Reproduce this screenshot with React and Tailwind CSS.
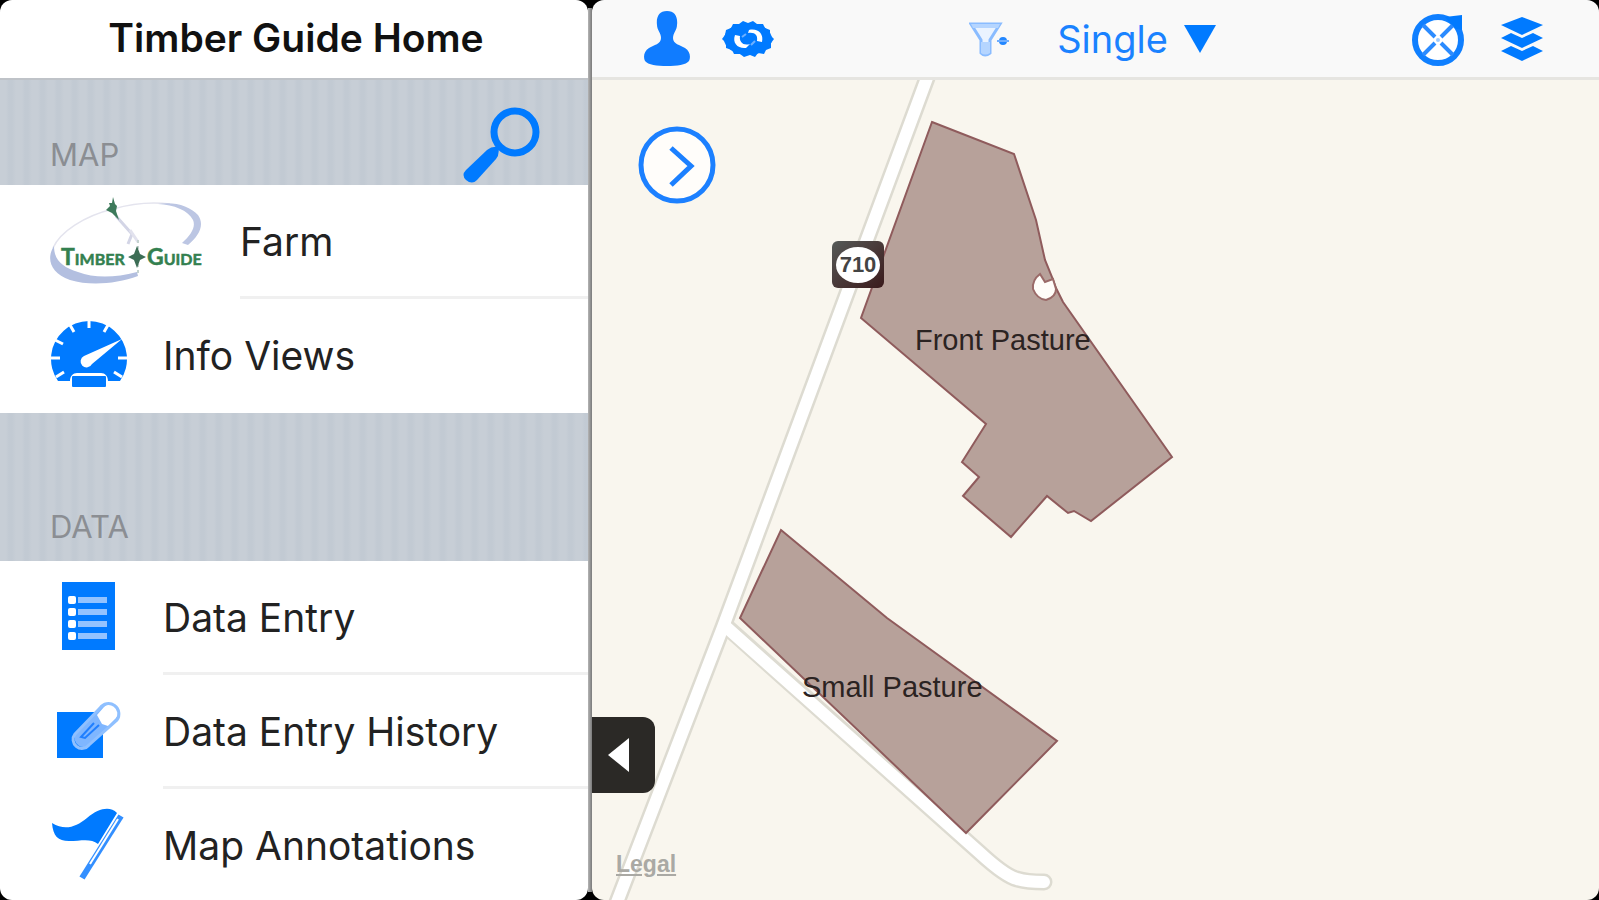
import React, { useState } from 'react';

const LogoIcon = () => (
  <svg width="152" height="88" viewBox="0 0 152 88" aria-hidden="true">
    <path d="M3 52C10 36 34 20 63 13C84 7 104 6 120 8" fill="none" stroke="#e4e4ee" strokeWidth="1.5" />
    <path d="M4 50C-4 62 0 77 20 84C40 90 66 88 88 80L87 76C64 82 44 82 28 76C12 71 4 64 4 50Z" fill="#b3bfe0" />
    <path d="M108 8C124 5 140 10 148 19C155 29 149 40 138 49L132 47C141 39 146 31 143 24C138 14 124 9 108 8Z" fill="#bcc6e3" />
    <path d="M66 20L82 38L78 48" fill="none" stroke="#d3d5e6" strokeWidth="3" />
    <path d="M80 34L88 46" stroke="#e2e2ee" strokeWidth="3" />
    <path d="M63 1L65 8L67 10L66 15L69 24L62 17L56 14L60 10L59 7L62 7Z" fill="#3d7a5b" />
    <path d="M88 44V78" stroke="#c5d3d0" strokeWidth="2" strokeDasharray="3 3" />
    <path d="M87 50L90 58L96 61L90 64L87 72L84 64L78 61L84 58Z" fill="#3c6d55" />
    <g fill="#33804f" stroke="#33804f" strokeWidth="0.5" fontFamily="Lato, sans-serif" fontWeight="700">
      <text x="11" y="69" fontSize="23">T<tspan fontSize="16">IMBER</tspan></text>
      <text x="97" y="69" fontSize="23">G<tspan fontSize="16">UIDE</tspan></text>
    </g>
  </svg>
);

const GaugeIcon = () => (
  <svg width="78" height="68" viewBox="0 0 78 68" aria-hidden="true">
    <path d="M8 61A38 38 0 1 1 70 61L58 61C58 56 55 53 51 53H27C23 53 20 56 20 61Z" fill="#007aff" />
    <g stroke="#fff" strokeWidth="3">
      <path d="M39 0V8M20 5L24 12M58 5L54 12M5 20L13 24M0 38H10M68 38H78M6 57L14 52M72 57L64 52" />
    </g>
    <path d="M72 19L42 44A6 6 0 1 1 34 36Z" fill="#fff" />
    <rect x="22" y="56" width="34" height="11" rx="1" fill="#007aff" />
  </svg>
);

const ListIcon = () => (
  <svg width="78" height="68" viewBox="0 0 78 68" aria-hidden="true">
    <rect x="12" y="0" width="53" height="68" fill="#007aff" />
    {[18, 30, 42, 54].map((y) => (
      <g key={y}>
        <rect x="18" y={y - 4} width="8" height="8" rx="2" fill="#fff" />
        <path d={`M28 ${y}H57`} stroke="#93c3ff" strokeWidth="6" />
      </g>
    ))}
  </svg>
);

const ClipIcon = () => (
  <svg width="78" height="68" viewBox="0 0 78 68" aria-hidden="true">
    <rect x="7" y="16" width="46" height="46" fill="#007aff" />
    <path d="M26 37L51 12A9 9 0 0 1 66 25L41 47A8 8 0 0 1 26 37Z" fill="#7fb6ff" />
    <path d="M47 19L54 11A8 8 0 0 1 66 22L58 30L52 28Z" fill="#fff" />
    <path d="M25 38L50 12A10 10 0 0 1 67 24L39 49A8 8 0 0 1 25 38Z" fill="none" stroke="#8fc0ff" strokeWidth="3" />
    <path d="M49 29L35 42L31 41L44 27" fill="none" stroke="#207fff" strokeWidth="2" />
  </svg>
);

const FlagIcon = () => (
  <svg width="78" height="72" viewBox="0 0 78 72" aria-hidden="true">
    <path d="M2 15C15 23 26 19 37 10C49 0 60 -2 67 5L48 36C41 30 31 33 19 33C8 33 3 28 2 15Z" fill="#007aff" />
    <path d="M71 8L32 70" stroke="#338fff" strokeWidth="6" />
    <path d="M68 11L40 56" stroke="#fff" strokeWidth="2" />
  </svg>
);

const SearchIcon = () => (
  <svg width="78" height="78" viewBox="0 0 78 78" aria-hidden="true">
    <circle cx="53" cy="25" r="21" fill="none" stroke="#007aff" strokeWidth="7" />
    <path d="M36 40L38 42" stroke="#007aff" strokeWidth="8" />
    <path d="M25 43Q30 39 36 40Q38 47 34 52L15 73Q10 78 4 73Q-1 68 4 63Z" fill="#007aff" />
  </svg>
);

const PersonIcon = () => (
  <svg width="46" height="55" viewBox="0 0 46 55" aria-hidden="true">
    <path d="M23 0C31 0 34 6 33 14C33 19 29 22 29 27C29 33 36 34 41 37C46 40 47 46 45 50C42 54 33 55 23 55C13 55 4 54 1 50C-1 46 0 40 5 37C10 34 17 33 17 27C17 22 13 19 13 14C12 6 15 0 23 0Z" fill="#107cff" />
  </svg>
);

const GearIcon = () => (
  <svg width="52" height="38" viewBox="0 0 52 38" aria-hidden="true">
    <ellipse cx="26" cy="19" rx="24" ry="16" fill="#007aff" />
    <path
      d="M26 3L31 1L35 4L41 4L43 8L48 10L48 15L52 19L49 23L49 28L44 30L42 34L36 33L33 37L28 35L22 37L18 34L12 34L10 30L4 28L4 23L0 19L3 15L4 10L9 8L11 4L17 4L21 1Z"
      fill="#007aff"
    />
    <path d="M13 15C10 23 16 29 24 28L28 24C21 26 17 22 18 16Z" fill="#fff" />
    <path d="M27 10C36 8 42 14 40 22L35 21C36 15 33 12 26 13Z" fill="#fff" />
    <path d="M20 17L24 14M29 25L33 21" stroke="#6db0ff" strokeWidth="2" />
  </svg>
);

const FilterIcon = () => (
  <svg width="40" height="36" viewBox="0 0 40 36" aria-hidden="true">
    <path d="M2 3H31L21 19V32Q16 36 12 32V19Z" fill="#eaf3ff" stroke="#8abcff" strokeWidth="3" />
    <path d="M2 3H31L29 7H4ZM12 21H21V32Q16 35 12 32Z" fill="#b5d5ff" />
    <circle cx="34" cy="20" r="4" fill="#2387ff" />
    <path d="M28 20H40" stroke="#6faeff" strokeWidth="2" />
  </svg>
);

const CompassIcon = () => (
  <svg width="54" height="54" viewBox="0 0 54 54" aria-hidden="true">
    <circle cx="27" cy="28" r="23" fill="#fff" stroke="#0f7fff" strokeWidth="6" />
    <path d="M12 13L24 25M30 25L42 13M12 43L24 31M30 31L42 43" stroke="#2b8bff" strokeWidth="4" />
    <path d="M34 5L51 3V18L45 17L38 10Z" fill="#007aff" />
    <circle cx="27" cy="28" r="2" fill="#9dcaff" />
  </svg>
);

const LayersIcon = () => (
  <svg width="42" height="44" viewBox="0 0 42 44" aria-hidden="true">
    <g fill="#007aff">
      <path d="M21 0L42 8L21 18L0 8Z" />
      <path d="M0 21L10 16L21 21L32 16L42 21L21 31Z" />
      <path d="M0 34L10 29L21 34L32 29L42 34L21 44Z" />
    </g>
  </svg>
);

const MapDrawing = () => (
  <svg className="absolute inset-0 h-full w-full" aria-hidden="true">
    <g fill="none" strokeLinecap="round" strokeLinejoin="round">
      <path d="M335 -2L208 340L131 547L22 830" stroke="#dddbd1" strokeWidth="17" />
      <path d="M136 548L388 773Q413 796 425 799Q434 802 452 802" stroke="#dddbd1" strokeWidth="17" />
      <path d="M335 -2L208 340L131 547L22 830" stroke="#fff" strokeWidth="12" />
      <path d="M133 546L388 773Q413 796 425 799Q434 802 452 802" stroke="#fff" strokeWidth="12" />
    </g>
    <g fill="#b7a19a" stroke="#8f5b5c" strokeWidth="2">
      <path d="M340 42L422 74L444 140L453 180L460 197L464 208L471 222L580 377L499 441L482 431L476 433L455 416L419 457L371 416L387 397L370 382L394 344L269 238Z" />
      <path d="M189 450L295 538L465 661L374 753L148 538Z" />
    </g>
    <path d="M448 194Q440 200 441 209Q445 219 454 220Q464 217 464 209L461 199L453 202Z" fill="#fffdf9" stroke="#9a6a68" strokeWidth="2" />
  </svg>
);

const sections = [
  {
    name: 'MAP',
    headerClass: 'h-[105px] pb-3',
    search: true,
    items: [
      { label: 'Farm', icon: <LogoIcon />, iconClass: 'w-[190px]' },
      { label: 'Info Views', icon: <GaugeIcon />, iconClass: 'w-[113px]' },
    ],
  },
  {
    name: 'DATA',
    headerClass: 'h-[148px] pb-4',
    items: [
      { label: 'Data Entry', icon: <ListIcon />, iconClass: 'w-[113px]' },
      { label: 'Data Entry History', icon: <ClipIcon />, iconClass: 'w-[113px]' },
      { label: 'Map Annotations', icon: <FlagIcon />, iconClass: 'w-[113px]' },
    ],
  },
];

const Sidebar = () => (
  <aside className="flex w-[588px] shrink-0 flex-col overflow-hidden rounded-xl bg-white">
    <header className="flex h-20 shrink-0 items-center justify-center border-b-2 border-[#bfc3c8] pb-1 pl-1">
      <h1 className="text-[39px] leading-none font-semibold text-[#111]">Timber Guide Home</h1>
    </header>
    {sections.map((section) => (
      <section key={section.name} className="shrink-0">
        <div
          className={`flex items-end justify-between bg-[repeating-linear-gradient(90deg,#c7ced6_0px,#c7ced6_6px,#c2cad3_9px,#c2cad3_12px,#c7ced6_16px)] pr-12 pl-[50px] ${section.headerClass}`}
        >
          <h2 className="text-[31px] leading-9 text-[#8b8e93]">{section.name}</h2>
          {section.search && (
            <button type="button" aria-label="Search" className="-mb-3">
              <SearchIcon />
            </button>
          )}
        </div>
        <ul>
          {section.items.map((item) => (
            <li key={item.label} className="group/row">
              <button type="button" className="flex h-[114px] w-full items-center pl-[50px] text-left">
                <span className={`shrink-0 pb-1 ${item.iconClass}`}>{item.icon}</span>
                <span className="flex h-full flex-1 items-center border-b-3 border-[#f0f0f0] pt-1 text-[39px] text-[#222] group-last/row:border-transparent">
                  {item.label}
                </span>
              </button>
            </li>
          ))}
        </ul>
      </section>
    ))}
  </aside>
);

const Toolbar = () => {
  const [mode, setMode] = useState('Single');

  return (
    <div className="flex h-20 shrink-0 items-center justify-between border-b-3 border-[#e6e5e1] bg-[#f9f9f9] pr-14 pl-13">
      <div className="flex items-center gap-8">
        <button type="button" aria-label="Account">
          <PersonIcon />
        </button>
        <button type="button" aria-label="Settings">
          <GearIcon />
        </button>
      </div>
      <div className="flex items-center">
        <button type="button" aria-label="Filter" className="mr-12">
          <FilterIcon />
        </button>
        <label className="flex items-center gap-4">
          <select
            aria-label="Selection mode"
            value={mode}
            onChange={(e) => setMode(e.target.value)}
            className="field-sizing-content h-14 appearance-none bg-transparent text-[38px] leading-[56px] text-[#1a82ff]"
          >
            <option>Single</option>
            <option>Multiple</option>
          </select>
          <svg width="32" height="28" viewBox="0 0 32 28" aria-hidden="true">
            <path d="M0 0H32L16 28Z" fill="#007aff" />
          </svg>
        </label>
      </div>
      <div className="flex items-center gap-9">
        <button type="button" aria-label="Locate">
          <CompassIcon />
        </button>
        <button type="button" aria-label="Layers">
          <LayersIcon />
        </button>
      </div>
    </div>
  );
};

const MapView = () => (
  <div className="relative flex-1 overflow-hidden bg-[#f9f6ee] font-['Liberation_Sans',Arial,sans-serif]">
    <MapDrawing />
    <div className="absolute top-[161px] left-[240px] flex h-[47px] w-[52px] items-center justify-center rounded-md bg-linear-to-br from-[#555a58] to-[#3a1a1c]">
      <span className="flex h-9 w-11 items-center justify-center rounded-[50%] bg-white text-[22px] leading-none font-bold text-[#444]">
        710
      </span>
    </div>
    <span className="absolute top-[244px] left-[323px] text-[29px] leading-8 whitespace-nowrap text-[#2b2322]">
      Front Pasture
    </span>
    <span className="absolute top-[591px] left-[210px] text-[29px] leading-8 whitespace-nowrap text-[#2b2322]">
      Small Pasture
    </span>
    <button type="button" aria-label="Next" className="absolute top-[46px] left-[46px]">
      <svg width="78" height="78" viewBox="0 0 78 78" aria-hidden="true">
        <circle cx="39" cy="39" r="36" fill="#fffdfa" stroke="#1c80ff" strokeWidth="5" />
        <path d="M33 22L53 40L33 59" fill="none" stroke="#1c80ff" strokeWidth="5" />
      </svg>
    </button>
    <button
      type="button"
      aria-label="Hide menu"
      className="absolute bottom-[107px] left-0 flex h-[76px] w-[63px] items-center rounded-r-xl bg-[#2b2926] pl-4"
    >
      <svg width="21" height="34" viewBox="0 0 21 34" aria-hidden="true">
        <path d="M21 0V34L0 17Z" fill="#fff" />
      </svg>
    </button>
    <a href="#legal" className="absolute bottom-5 left-6 text-[23px] leading-8 font-bold text-[#aaa9a4] underline">
      Legal
    </a>
  </div>
);

const App = () => (
  <div className="flex h-screen overflow-hidden bg-black font-['Inter',sans-serif]">
    <Sidebar />
    <div className="my-2 w-1 shrink-0 bg-linear-to-r from-[#b5b5b5] to-[#7b7b7b]" />
    <main className="flex min-w-0 flex-1 flex-col overflow-hidden rounded-xl">
      <Toolbar />
      <MapView />
    </main>
  </div>
);

export default App;
